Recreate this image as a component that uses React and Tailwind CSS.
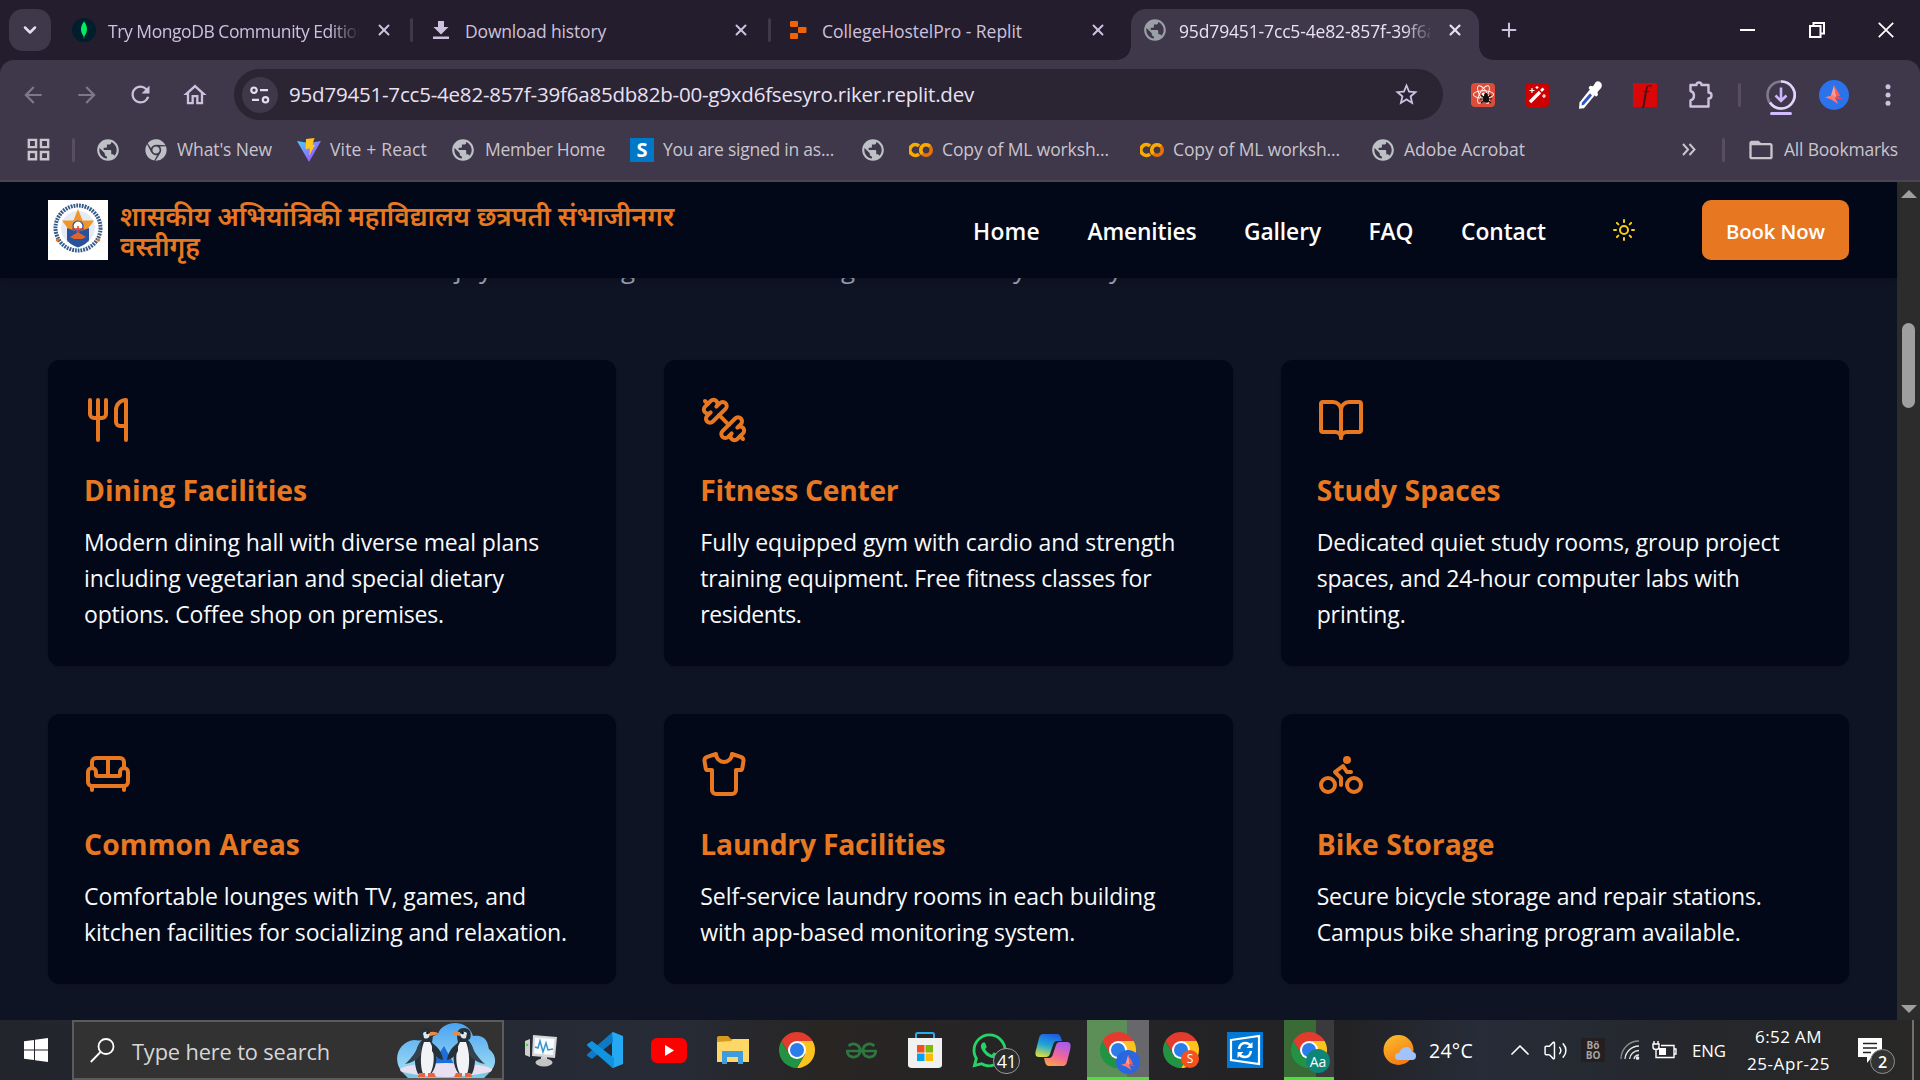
import React, { useLayoutEffect, useRef, useState } from "react";
import { Sun, Shirt, Bike, Sofa, BookOpen, Utensils, ChevronDown, ChevronUp, X, Plus, Volume2 } from "lucide-react";
import { MdPublic, MdArrowBack, MdArrowForward, MdRefresh, MdOutlineHome, MdStarBorder, MdOutlineGridView, MdFolderOpen } from "react-icons/md";
import { FaWhatsapp, FaChrome, FaReact } from "react-icons/fa";
import { SiGeeksforgeeks } from "react-icons/si";

/* A single line of text whose letter spacing is tuned so that it spans `w` pixels. */
function Line({ w, children, className = "" }) {
  const ref = useRef(null);
  const [ls, setLs] = useState(0);
  useLayoutEffect(() => {
    const el = ref.current;
    el.style.letterSpacing = "0px";
    const natural = el.getBoundingClientRect().width;
    setLs((w - natural) / String(children).length);
  }, [w, children]);
  return (
    <span className={"block shrink-0 whitespace-nowrap " + className} style={{ width: w }}>
      <span ref={ref} className="inline-block" style={{ letterSpacing: ls + "px" }}>{children}</span>
    </span>
  );
}

const Dumbbell = () => (
  <svg width="48" height="48" viewBox="0 0 24 24" fill="none" stroke="currentColor" strokeWidth="2" strokeLinecap="round" strokeLinejoin="round">
    <path d="M14.4 14.4 9.6 9.6" />
    <path d="M18.657 21.485a2 2 0 1 1-2.829-2.828l-1.767 1.768a2 2 0 1 1-2.829-2.829l6.364-6.364a2 2 0 1 1 2.829 2.829l-1.768 1.767a2 2 0 1 1 2.828 2.829z" />
    <path d="m21.5 21.5-1.4-1.4" />
    <path d="M3.9 3.9 2.5 2.5" />
    <path d="M6.404 12.768a2 2 0 1 1-2.829-2.829l1.768-1.767a2 2 0 1 1-2.828-2.829l2.828-2.828a2 2 0 1 1 2.829 2.828l1.767-1.768a2 2 0 1 1 2.829 2.829z" />
  </svg>
);

const ChromeLogo = ({ size = 36 }) => (
  <svg width={size} height={size} viewBox="2 2 44 44" className="shrink-0">
    <path d="M4.95 13A22 22 0 0 1 43.05 13H24L14.5 29.5Z" fill="#e33b2e" />
    <path d="M43.05 13A22 22 0 0 1 24 46L33.5 29.5L24 13Z" fill="#fcc31e" />
    <path d="M24 46A22 22 0 0 1 4.95 13L14.5 29.5H33.5Z" fill="#229342" />
    <circle cx="24" cy="24" r="11" fill="#fff" />
    <circle cx="24" cy="24" r="8.6" fill="#2b7de9" />
  </svg>
);

const Colab = () => (
  <svg width="24" height="16" viewBox="0 0 24 16" fill="none" strokeWidth="3.6" className="shrink-0">
    <path d="M10 4A5.4 5.4 0 1 0 10 12" stroke="#f9ab00" />
    <circle cx="17" cy="8" r="5.2" stroke="#e8710a" />
    <path d="M13.3 11.7A5.2 5.2 0 0 1 20.7 4.3" stroke="#f9ab00" />
  </svg>
);

const Arrow = ({ size = 19 }) => (
  <svg width={size} height={size} viewBox="0 0 20 20">
    <path d="M9.500 0L12 12L8 15L6 12Z" fill="#ff9a90" />
    <path d="M9.500 0L16 11L12 13Z" fill="#f4605a" />
    <path d="M0 13L9 10.500L14 20L7 15.500Z" fill="#ff7b6e" />
    <path d="M12 11L19 15L10.500 14.500Z" fill="#e84d5b" />
  </svg>
);

const Puzzle = () => (
  <svg width="26" height="30" viewBox="0 0 26 30" fill="none" stroke="#cdc2de" strokeWidth="2.400" strokeLinejoin="round" className="shrink-0">
    <path d="M2.500 5H8.500Q8.500 2.500 11 2.500Q13.500 2.500 13.500 5H20.500V12.500Q23.500 12.500 23.500 15.500Q23.500 18.500 20.500 18.500V26.500H2.500V20.500Q6 19.500 6 15.750Q6 12 2.500 11Z" />
  </svg>
);

const Sep = ({ className }) => <span className={"h-6 w-[3px] shrink-0 rounded bg-[#574e63] " + className} />;

function TabStrip() {
  return (
    <div className="flex h-[60px] items-center bg-[#241d2d] text-[17.5px] text-[#cdc2de]">
      <span className="ml-[9px] flex h-[42px] w-[42px] shrink-0 items-center justify-center rounded-[14px] bg-[#3f374a] text-[#e4dcef]"><ChevronDown size={20} strokeWidth={3} /></span>
      <svg width="24" height="24" viewBox="0 0 24 24" className="ml-[21px] shrink-0"><circle cx="12" cy="12" r="12" fill="#001e2b" /><path d="M12 3.5C15.5 8 16.3 13 12.4 18.3L12.2 20.5H11.8L11.6 18.3C7.7 13 8.5 8 12 3.5Z" fill="#00ed64" /></svg>
      <span className="ml-3 w-[252px] overflow-hidden pt-[2px] [mask-image:linear-gradient(to_right,black_222px,transparent_252px)]"><Line w={259}>Try MongoDB Community Edition</Line></span>
      <X size={18} strokeWidth={2.6} className="ml-[15px] shrink-0" />
      <Sep className="ml-[17px] !bg-[#3f374a]" />
      <svg width="16" height="18" viewBox="0 0 16 18" className="ml-[20px] shrink-0 fill-[#cdc2de]"><path d="M5 0h6v6h4.5L8 13.5 .5 6H5zM0 15.5h16V18H0z" /></svg>
      <Line w={141} className="ml-[16px] pt-[2px]">Download history</Line>
      <X size={18} strokeWidth={2.6} className="ml-[126px] shrink-0" />
      <Sep className="ml-[18px] !bg-[#3f374a]" />
      <svg width="17" height="18" viewBox="0 0 17 18" className="ml-[19px] shrink-0 fill-[#f26207]"><rect width="8" height="6" rx="1" /><rect x="8" y="6" width="8.5" height="6" rx="1" /><rect y="12" width="8" height="6" rx="1" /></svg>
      <Line w={200} className="ml-[15px] pt-[2px]">CollegeHostelPro - Replit</Line>
      <X size={18} strokeWidth={2.6} className="ml-[67px] shrink-0" />
      <div className="ml-[10px] flex h-[60px] items-end">
        <span className="h-[14px] w-[14px] bg-[radial-gradient(circle_at_0_0,transparent_13.5px,#3f374a_14px)]" />
        <div className="flex h-[51px] w-[348px] items-center rounded-t-[15px] bg-[#3f374a] pb-[9px] text-[#e9e1f3]">
          <MdPublic size={26} className="ml-[11px] shrink-0 text-[#9aa0a6]" />
          <span className="ml-[11px] w-[251px] overflow-hidden pt-[2px] [mask-image:linear-gradient(to_right,black_225px,transparent_255px)]"><Line w={267}>95d79451-7cc5-4e82-857f-39f6a8</Line></span>
          <X size={18} strokeWidth={2.8} className="ml-[16px] shrink-0" />
        </div>
        <span className="h-[14px] w-[14px] bg-[radial-gradient(circle_at_100%_0,transparent_13.5px,#3f374a_14px)]" />
      </div>
      <Plus size={22} strokeWidth={2.2} className="ml-[5px] shrink-0" />
      <span className="ml-[220px] h-[2px] w-[15px] shrink-0 bg-white" />
      <svg width="16" height="16" viewBox="0 0 16 16" fill="none" stroke="#fff" strokeWidth="2" className="ml-[54px] shrink-0"><path d="M1 4h10.5v11H1zM4.5 4V1H15v10.5h-3.5" /></svg>
      <svg width="16" height="16" viewBox="0 0 16 16" stroke="#fff" strokeWidth="1.8" className="ml-[53px] shrink-0"><path d="M.8.8l14.4 14.4M15.2.8L.8 15.2" /></svg>
    </div>
  );
}

function AddressBar() {
  return (
    <div className="flex h-[69px] items-center rounded-t-[14px] bg-[#3f374a] text-[#cdc2de]">
      <MdArrowBack size={26} className="ml-[20px] shrink-0 text-[#7f778a]" />
      <MdArrowForward size={26} className="ml-[28px] shrink-0 text-[#7f778a]" />
      <MdRefresh size={27} className="ml-[27px] shrink-0" />
      <MdOutlineHome size={28} className="ml-[27px] shrink-0" />
      <div className="ml-[25px] flex h-[51px] w-[1209px] shrink-0 items-center rounded-full bg-[#2a2433]">
        <span className="ml-2 flex h-9 w-9 shrink-0 items-center justify-center rounded-full bg-[#3f374a]">
          <svg width="20" height="18" viewBox="0 0 20 18" fill="none" stroke="#e4dcef" strokeWidth="2.2"><circle cx="4" cy="4.2" r="2.7" /><path d="M10 4.2h8M2 13.8h7" /><circle cx="15.5" cy="13.8" r="2.7" /></svg>
        </span>
        <Line w={685} className="ml-[11px] text-[20.5px] text-[#e9e1f3]">95d79451-7cc5-4e82-857f-39f6a85db82b-00-g9xd6fsesyro.riker.replit.dev</Line>
        <MdStarBorder size={27} className="ml-[419px] shrink-0" />
      </div>
      <span className="relative ml-[28px] flex h-6 w-6 shrink-0 items-center justify-center rounded-sm bg-[#dd4b39] text-white">
        <FaReact size={21} />
        <svg width="12" height="12" viewBox="0 0 12 12" className="absolute top-[9px] left-[9px]"><ellipse cx="6" cy="7" rx="3" ry="3.800" fill="#111" /><circle cx="6" cy="3" r="2" fill="#111" /><path d="M1 3l10 8M11 3L1 11M0 7h12" stroke="#111" strokeWidth="1.200" /></svg>
      </span>
      <span className="ml-[30px] flex h-6 w-6 shrink-0 items-center justify-center rounded-sm bg-[#cc0000]">
        <svg width="20" height="20" viewBox="0 0 20 20" stroke="#fff" fill="none"><path d="M3 17L13 7" strokeWidth="3.4" /><path d="M14 6L16.5 3.5" strokeWidth="2.6" /><path d="M5 3v5M2.5 5.5h5M10 1v3M8.5 2.5h3M17 9v4M15 11h4" strokeWidth="1.2" /></svg>
      </span>
      <svg width="26" height="30" viewBox="0 0 26 26" preserveAspectRatio="none" className="ml-[28px] shrink-0"><path d="M14 7L19 12L7 24.5L2 25L2.5 19.5Z" fill="#fff" /><path d="M13 11.5L15 13.5L7 21.5L4.5 22L5 19.5Z" fill="#2f55c8" /><path d="M13 5L16 5.5L19 1.5Q22 0 24.5 3Q25.5 6 23 8L20.5 10.5L21 13L19 14.5L11.5 7Z" fill="#fff" /></svg>
      <span className="ml-[30px] flex h-6 w-6 shrink-0 items-center justify-center bg-[#d90707] font-['Liberation_Serif',serif] text-[25px] leading-none italic text-[#4a1414]">f</span>
      <span className="ml-[31px]"><Puzzle /></span>
      <Sep className="ml-[24px]" />
      <div className="relative ml-[25px] h-[30px] w-[30px] shrink-0">
        <svg width="30" height="30" viewBox="0 0 30 30" fill="none" strokeWidth="2.6"><circle cx="15" cy="15" r="13.5" stroke="#82798f" /><path d="M15 1.5A13.5 13.5 0 1 1 4 22.5" stroke="#e5d3ff" /><path d="M15 7.500v13M9.500 15.500l5.500 5.500 5.500-5.500" stroke="#cfb4ff" /></svg>
        <span className="absolute top-[32px] left-[4px] h-[3px] w-[22px] rounded bg-[#d3bbff]" />
      </div>
      <span className="ml-[23px] flex h-[30px] w-[30px] shrink-0 items-center justify-center rounded-full bg-[#2c72ea]"><Arrow /></span>
      <svg width="6" height="22" viewBox="0 0 6 22" className="ml-[36px] shrink-0 fill-[#cdc2de]"><circle cx="3" cy="2.7" r="2.5" /><circle cx="3" cy="11" r="2.5" /><circle cx="3" cy="19.3" r="2.5" /></svg>
    </div>
  );
}

function Bookmarks() {
  return (
    <div className="flex h-[53px] items-center border-b-2 border-[#4a454e] bg-[#3f374a] pb-[10px] text-[17.5px] text-[#c9c5cd]">
      <MdOutlineGridView size={29} className="ml-[24px] shrink-0" />
      <Sep className="ml-[19px]" />
      <MdPublic size={26} className="ml-[20px] shrink-0 text-[#bdc1c6]" />
      <FaChrome size={22} className="ml-[24px] shrink-0 text-[#bdc1c6]" />
      <Line w={95} className="ml-[10px]">What's New</Line>
      <svg width="24" height="24" viewBox="0 0 24 24" className="ml-[25px] shrink-0"><defs><linearGradient id="vite" x1="0" y1="0" x2="1" y2="1"><stop offset="0" stopColor="#41d1ff" /><stop offset="1" stopColor="#bd34fe" /></linearGradient></defs><path d="M0 3L12 5L24 3L12 24Z" fill="url(#vite)" /><path d="M9 1L17.5 0L15.5 6.5L18 7L12 18L13 10.5L8.5 11Z" fill="#ffc51c" /></svg>
      <Line w={97} className="ml-[9px]">Vite + React</Line>
      <MdPublic size={26} className="ml-[23px] shrink-0 text-[#bdc1c6]" />
      <Line w={120} className="ml-[9px]">Member Home</Line>
      <span className="ml-[25px] flex h-6 w-6 shrink-0 items-center justify-center bg-[#0078c8] text-[20px] leading-none font-bold text-white">S</span>
      <Line w={171} className="ml-[9px]">You are signed in as...</Line>
      <MdPublic size={26} className="ml-[26px] shrink-0 text-[#bdc1c6]" />
      <span className="ml-[23px]"><Colab /></span>
      <Line w={167} className="ml-[9px]">Copy of ML worksh...</Line>
      <span className="ml-[31px]"><Colab /></span>
      <Line w={167} className="ml-[9px]">Copy of ML worksh...</Line>
      <MdPublic size={26} className="ml-[30px] shrink-0 text-[#bdc1c6]" />
      <Line w={121} className="ml-[8px]">Adobe Acrobat</Line>
      <svg width="14" height="13" viewBox="0 0 14 13" fill="none" stroke="#c9c5cd" strokeWidth="2" className="ml-[157px] shrink-0"><path d="M1 1l5 5.500-5 5.500M7.500 1l5 5.500-5 5.500" /></svg>
      <Sep className="ml-[26px]" />
      <MdFolderOpen size={28} className="ml-[22px] shrink-0" />
      <Line w={114} className="ml-[9px]">All Bookmarks</Line>
    </div>
  );
}

const CollegeLogo = () => (
  <svg width="60" height="60" viewBox="0 0 60 60" className="shrink-0">
    <rect width="60" height="60" fill="#fff" />
    <circle cx="30" cy="28" r="22.5" fill="none" stroke="#345a8c" strokeWidth="4" strokeDasharray="1.8 1" />
    <circle cx="9.5" cy="40" r="1.8" fill="#e87722" /><circle cx="50.5" cy="40" r="1.8" fill="#e87722" />
    <circle cx="30" cy="28" r="17" fill="#e6eaf2" />
    <path d="M30 9L34.5 20.5L46 20.5L39 30L41 42L30 37L19 42L21 30L14 20.5L25.5 20.5Z" fill="#f0952b" />
    <path d="M19 28L30 32L41 28V40Q38 45 30 47.5Q22 45 19 40Z" fill="#28539b" />
    <circle cx="30" cy="26" r="5" fill="#fff" stroke="#28539b" strokeWidth="1.2" />
    <path d="M24 29H36M30 26V33" stroke="#d8392b" strokeWidth="1.4" />
    <path d="M22 37L30 32L38 37L34 39H26Z" fill="#e2622b" />
  </svg>
);

const NAV = [["Home", 67], ["Amenities", 109], ["Gallery", 77], ["FAQ", 45], ["Contact", 85]];

function SiteHeader() {
  return (
    <header className="relative z-10 flex h-24 items-center bg-[#020817] pl-12 text-white shadow-md">
      <CollegeLogo />
      <div className="ml-3 w-[600px] pt-[2px] text-[26.4px] leading-[30px] font-semibold text-[#e87722]">
        <div className="whitespace-nowrap">शासकीय अभियांत्रिकी महाविद्यालय छत्रपती संभाजीनगर</div>
        <div>वस्तीगृह</div>
      </div>
      <nav className="ml-[253px] flex gap-[47.5px] pt-[4px] text-[22.8px] font-semibold">
        {NAV.map(([t, w]) => <Line key={t} w={w}>{t}</Line>)}
      </nav>
      <Sun size={24} className="ml-[66px] shrink-0 text-[#facc15]" />
      <button className="ml-[66px] flex h-[60px] w-[147px] shrink-0 items-center justify-center rounded-[9px] bg-[#e87722] pt-[3px] text-[20.3px] font-semibold"><Line w={99}>Book Now</Line></button>
    </header>
  );
}

const CARDS = [
  { icon: <Utensils size={48} />, title: ["Dining Facilities", 223], lines: [["Modern dining hall with diverse meal plans", 455], ["including vegetarian and special dietary", 420], ["options. Coffee shop on premises.", 360]] },
  { icon: <Dumbbell />, title: ["Fitness Center", 198], lines: [["Fully equipped gym with cardio and strength", 475], ["training equipment. Free fitness classes for", 451], ["residents.", 101]] },
  { icon: <BookOpen size={48} />, title: ["Study Spaces", 184], lines: [["Dedicated quiet study rooms, group project", 463], ["spaces, and 24-hour computer labs with", 423], ["printing.", 89]] },
  { icon: <Sofa size={48} />, title: ["Common Areas", 216], lines: [["Comfortable lounges with TV, games, and", 442], ["kitchen facilities for socializing and relaxation.", 483]] },
  { icon: <Shirt size={48} />, title: ["Laundry Facilities", 245], lines: [["Self-service laundry rooms in each building", 455], ["with app-based monitoring system.", 375]] },
  { icon: <Bike size={48} />, title: ["Bike Storage", 178], lines: [["Secure bicycle storage and repair stations.", 445], ["Campus bike sharing program available.", 424]] },
];

function Amenities() {
  return (
    <main className="h-[742px] overflow-hidden bg-[#0f1425]">
      <div className="-mt-[28px] flex h-[37px] pl-[455px] text-[26px] leading-[36px] text-[#94a3b8]">
        <span className="w-[24px]">j</span><span className="w-[142px]">y</span><span className="w-[220px]">g</span><span className="w-[172px]">g</span><span className="w-[96px]">y</span><span>y</span>
      </div>
      <div className="mt-[73px] ml-12 grid w-[1801px] grid-cols-3 gap-12">
        {CARDS.map((c) => (
          <article key={c.title[0]} className="rounded-xl bg-[#020817] px-9 pt-9 pb-[34px] shadow-sm">
            <div className="mb-[25px] text-[#e87722]">{c.icon}</div>
            <h3 className="mb-[13px] text-[28.3px] leading-[42px] font-bold text-[#e87722]"><Line w={c.title[1]}>{c.title[0]}</Line></h3>
            <div className="text-[23px] leading-[36px] text-[#f8fafc]">
              {c.lines.map(([t, w]) => <Line key={t} w={w}>{t}</Line>)}
            </div>
          </article>
        ))}
      </div>
    </main>
  );
}

function Scrollbar() {
  return (
    <div className="flex w-[23px] shrink-0 flex-col items-center bg-[#2c2c2c] pt-2">
      <svg width="16" height="8" viewBox="0 0 16 8"><path d="M8 0L16 8H0Z" fill="#9f9f9f" /></svg>
      <span className="mt-[125px] h-[85px] w-[13px] rounded-full bg-[#9f9f9f]" />
      <svg width="16" height="8" viewBox="0 0 16 8" className="mt-auto mb-[7px]"><path d="M8 8L16 0H0Z" fill="#9f9f9f" /></svg>
    </div>
  );
}

const Penguin = () => (
  <g>
    <path d="M17 18C9 26 8 42 13 52H26C33 44 33 30 27 20C29 12 28 6 21 6C15 6 13 11 15 17Z" fill="#26313b" />
    <path d="M19 20C15 30 15 44 18 52H25C30 43 30 29 25 20Z" fill="#f1f3f6" />
    <path d="M16 19C12 28 7 36 0 42C6 41 12 38 16 33Z" fill="#34424e" />
    <path d="M18 11Q22 8 25 12Q24 18 19 16Z" fill="#dfe7ee" />
    <circle cx="22.500" cy="11" r="1.300" fill="#111" />
    <path d="M25 10Q31 9 34 12L25 14Z" fill="#f08a3c" />
    <path d="M27 21C33 25 37 30 38 38C33 37 30 34 27 29Z" fill="#26313b" />
    <path d="M14 51h6v4H13zM23 51h6l2 4h-8z" fill="#e8643c" />
  </g>
);

const Cell = ({ children, className = "" }) => <div className={"relative flex h-[60px] w-16 shrink-0 items-center justify-center " + className}>{children}</div>;

function Taskbar() {
  return (
    <footer className="flex h-[60px] items-center bg-[linear-gradient(to_right,#22252c,#262b36_35%,#282523_43%,#242427_60%,#222224_70%,#262c38_77%,#25272c_88%,#292826)] text-white">
      <svg width="24" height="24" viewBox="0 0 24 24" className="ml-6 shrink-0 fill-white"><path d="M0 3.3L10 2V11.5H0zM11 1.8L24 0V11.5H11zM0 12.5H10V22L0 20.7zM11 12.5H24V24L11 22.2z" /></svg>
      <div className="ml-6 flex h-[60px] w-[432px] shrink-0 items-center border-2 border-[#5b5b5b] bg-[#323232]">
        <svg width="25" height="25" viewBox="0 0 25 25" fill="none" stroke="#fff" strokeWidth="1.8" className="ml-4 shrink-0"><circle cx="16" cy="8.5" r="7.5" /><path d="M10.5 14L.8 24" /></svg>
        <Line w={198} className="ml-[17px] pt-[4px] text-[21.8px] text-[#d6d6d6]">Type here to search</Line>
        <svg width="100" height="56" viewBox="0 0 100 56" className="ml-[66px] shrink-0">
          <defs><linearGradient id="ice" x1="0" y1="0" x2="0" y2="1"><stop offset="0" stopColor="#4ba3f2" /><stop offset="1" stopColor="#9ddcf2" /></linearGradient></defs>
          <path d="M6 50C-4 38 2 20 18 18C30 20 36 14 42 12C46 -2 72 -4 77 14C92 12 92 24 93 27C102 34 100 44 94 50Z" fill="url(#ice)" />
          <path d="M36 42L48 24L58 42Z" fill="#1d6fd8" />
          <ellipse cx="50" cy="48" rx="46" ry="7" fill="#e9dff0" /><path d="M6 50Q50 60 94 50L88 56H12Z" fill="#78c8e4" />
          <g transform="translate(9 0)"><Penguin /></g>
          <g transform="translate(89 0) scale(-1 1)"><Penguin /></g>
        </svg>
      </div>
      <div className="ml-[5px] flex">
        <Cell>
          <svg width="34" height="34" viewBox="0 0 34 34"><path d="M1 8L6 6V24L1 22Z" fill="#cfcfcf" /><path d="M9 2L33 4L31 25L8 23Z" fill="#d4d6d8" /><path d="M11 4.5L30.5 6L29 22L10 20.5Z" fill="#f8fbfd" /><path d="M11 14L14 15L16 8L19 19L22 10L24 17L29 16" fill="none" stroke="#3b93c9" strokeWidth="1.5" /><path d="M17 24h6v6h-6z" fill="#d0d0d0" /><ellipse cx="20" cy="29.500" rx="8.500" ry="4" fill="#c4c4c4" /><circle cx="3" cy="12" r="1.2" fill="#3ddc3d" /></svg>
        </Cell>
        <Cell>
          <svg width="36" height="36" viewBox="0 0 36 36"><path d="M26 0L36 4V32L26 36L25 35.5V.5Z" fill="#24a9f2" /><path d="M25 .5L26 10L5 27L1 24.5Q-1 23 1 21.5Z" fill="#0e79c4" /><path d="M1 11.5L5 9L27 26V36L25 35.5L1 14.5Q-1 13 1 11.5Z" fill="#1193e0" /></svg>
        </Cell>
        <Cell><span className="flex h-[25px] w-9 items-center justify-center rounded-md bg-[#f00]"><svg width="9" height="11" viewBox="0 0 9 11"><path d="M0 0L9 5.5L0 11Z" fill="#fff" /></svg></span></Cell>
        <Cell>
          <svg width="32" height="28" viewBox="0 0 32 28"><path d="M0 1.5Q0 0 2 0H11L14 3H32V25H0Z" fill="#d69a1c" /><path d="M0 6L14 5L16 3H32V26H0Z" fill="#ffd766" /><path d="M5 15H26V28H21V21H10V28H5Z" fill="#3f9be0" /></svg>
        </Cell>
        <Cell><ChromeLogo /></Cell>
        <Cell><SiGeeksforgeeks size={31} className="text-[#2f8d46] opacity-80" /></Cell>
        <Cell>
          <svg width="36" height="37" viewBox="0 0 36 37"><path d="M9 7V2.5Q9 1 10.5 1H25.5Q27 1 27 2.5V7" fill="none" stroke="#2aa9ec" strokeWidth="2" /><path d="M1 6H35V33Q35 36 31 36H5Q1 36 1 33Z" fill="#f1f1f1" /><path d="M10 13h7.5v7.5H10z" fill="#f25022" /><path d="M18.5 13H26v7.5h-7.5z" fill="#7fba00" /><path d="M10 21.5h7.5V29H10z" fill="#00a4ef" /><path d="M18.5 21.5H26V29h-7.5z" fill="#ffb900" /></svg>
        </Cell>
        <Cell>
          <FaWhatsapp size={39} className="text-[#25d366]" />
          <span className="absolute top-[28px] left-[36px] flex h-[26px] w-[27px] items-center justify-center rounded-full border border-[#9a9a9a] bg-[#2b2b2b] text-[18px]"><span className="-tracking-[0.5px]">41</span></span>
        </Cell>
        <Cell>
          <svg width="36" height="34" viewBox="0 0 36 34"><defs><linearGradient id="cpa" x1="0.6" y1="0" x2="0.3" y2="1"><stop offset="0" stopColor="#1c5fe0" /><stop offset="0.5" stopColor="#20a6d8" /><stop offset="1" stopColor="#d9df3c" /></linearGradient><linearGradient id="cpb" x1="0.7" y1="0" x2="0.3" y2="1"><stop offset="0" stopColor="#a75cf0" /><stop offset="0.6" stopColor="#f36a92" /><stop offset="1" stopColor="#f8a24b" /></linearGradient></defs><path d="M8 1H22Q25 1 26 5L27 8H22Q19 8 18 12L15 21Q14 24 11 24H4Q-1 24 1 17L4 5Q5 1 8 1Z" fill="url(#cpa)" /><path d="M28 33H14Q11 33 10 29L9 25H14Q17 25 18 21L21 12Q22 9 25 9H32Q37 9 35 17L32 29Q31 33 28 33Z" fill="url(#cpb)" /></svg>
        </Cell>
        <Cell className="ml-[2px] border-b-[3px] border-[#4be03a] bg-[linear-gradient(to_right,#5c8f58_40px,#67676c_40px)] !w-[62px] pt-[3px]">
          <ChromeLogo />
          <span className="absolute top-[30px] left-[29px] flex h-6 w-6 items-center justify-center rounded-full bg-[#2a66e0]"><Arrow size={15} /></span>
        </Cell>
        <Cell>
          <ChromeLogo />
          <span className="absolute top-[30px] left-[32px] flex h-[18px] w-[18px] items-center justify-center rounded-full bg-[#f4511e] text-[12px]">S</span>
        </Cell>
        <Cell>
          <svg width="36" height="36" viewBox="0 0 36 36"><rect width="36" height="36" fill="#0078d7" /><path d="M4 8L32 4V32L4 28Z" fill="none" stroke="#fff" strokeWidth="2.2" /><path d="M12 17Q13 11 18 11Q22 11 24 14M24 19Q23 25 18 25Q14 25 12 22" fill="none" stroke="#fff" strokeWidth="2.4" /><path d="M25.5 10V16H19.5zM10.5 26V20H16.5z" fill="#fff" /></svg>
        </Cell>
        <Cell className="ml-[7px] border-b-[3px] border-[#4be03a] bg-[linear-gradient(to_right,#3a6a36_32px,#3a3a3d_32px)] !w-[50px] pt-[3px]">
          <ChromeLogo />
          <span className="absolute top-[29px] left-[22px] flex h-6 w-6 items-center justify-center rounded-full bg-[#0f8577] text-[14px]">Aa</span>
        </Cell>
      </div>
      <svg width="34" height="34" viewBox="0 0 34 34" className="ml-[49px] shrink-0"><defs><linearGradient id="sun" x1="0" y1="0" x2="0.5" y2="1"><stop offset="0" stopColor="#fbc02d" /><stop offset="1" stopColor="#f57c14" /></linearGradient></defs><circle cx="15.5" cy="17" r="15" fill="url(#sun)" /><path d="M16 27Q12 27 12 23.5Q12 20 16 20Q18 14 23.5 14Q28 14 29 19Q33 19 33 23Q33 27 29 27Z" fill="#9fc4fb" /></svg>
      <Line w={44} className="ml-[12px] pt-[2px] text-[19.5px]">24°C</Line>
      <ChevronUp size={32} strokeWidth={1.3} className="ml-[31px] shrink-0" />
      <Volume2 size={25} strokeWidth={1.4} className="ml-[7px] shrink-0" />
      <span className="ml-[13px] flex h-6 w-6 shrink-0 flex-col items-center justify-center bg-[#251f20] text-[10px] leading-[10px] font-bold text-[#a5a5a5]"><span>Bö</span><span>BO</span></span>
      <svg width="20" height="20" viewBox="0 0 20 20" fill="none" stroke="#e8e8e8" strokeWidth="1.3" className="ml-[15px] shrink-0"><path d="M1 19A18 18 0 0 1 19 1" stroke="#8e8e8e" /><path d="M5 19A14 14 0 0 1 19 6M9.500 19A9.500 9.500 0 0 1 19 10.500M14 19A5 5 0 0 1 19 15" /><circle cx="17.5" cy="18" r="1.2" fill="#fff" /></svg>
      <svg width="25" height="18" viewBox="0 0 25 18" fill="none" stroke="#fff" strokeWidth="1.4" className="ml-[12px] shrink-0"><path d="M9 4.500H22V16.500H4V11M22 8H24V13H22M2 0V3M6 0V3M1 3H7V6Q7 8.500 4 8.500Q1 8.500 1 6ZM4 8.500V12" /><path d="M7 7h7v7H7z" fill="#fff" stroke="none" /></svg>
      <Line w={34} className="ml-[15px] pt-px text-[16.8px]">ENG</Line>
      <div className="ml-[21px] flex w-[83px] shrink-0 flex-col items-center text-[17px] leading-[27px]">
        <Line w={67}>6:52 AM</Line>
        <Line w={83}>25-Apr-25</Line>
      </div>
      <div className="relative ml-[28px] h-[60px] w-10 shrink-0">
        <svg width="24" height="26" viewBox="0 0 24 26" className="mt-[18px]"><path d="M0 0H24V19H14L9 25V19H0Z" fill="#fff" /><path d="M5 5.500H19M5 10H19M5 14.500H13" stroke="#222" strokeWidth="1.5" /></svg>
        <span className="absolute top-[29px] left-[12px] flex h-[25px] w-[25px] items-center justify-center rounded-full border border-[#8f8f8f] bg-[#333] text-[16px] font-semibold">2</span>
      </div>
      <span className="ml-[14px] h-[60px] w-[2px] shrink-0 bg-[#707070]" />
    </footer>
  );
}

export default function App() {
  return (
    <div className="flex h-[1080px] w-[1920px] flex-col overflow-hidden bg-[#241d2d] font-['Open_Sans','Noto_Sans',sans-serif]">
      <TabStrip />
      <AddressBar />
      <Bookmarks />
      <div className="flex h-[838px]">
        <div className="w-[1897px]">
          <SiteHeader />
          <Amenities />
        </div>
        <Scrollbar />
      </div>
      <Taskbar />
    </div>
  );
}
